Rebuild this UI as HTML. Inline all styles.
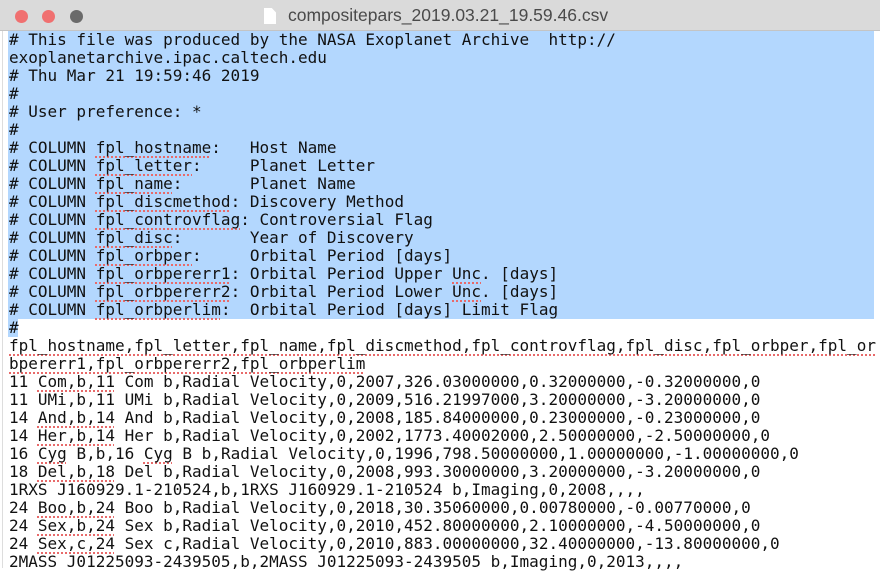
<!DOCTYPE html>
<html><head><meta charset="utf-8"><style>
html,body{margin:0;padding:0;width:880px;height:568px;overflow:hidden;background:#fff}
.tb{position:absolute;left:0;top:0;width:880px;height:30px;background:#dadada;border-bottom:1px solid #c4c4c4}
.dot{position:absolute;top:10px;width:13px;height:13px;border-radius:50%}
.title{position:absolute;left:288px;top:5px;font:17.5px "Liberation Sans",sans-serif;color:#4a4a4a;white-space:nowrap}
.doc{position:absolute;left:264px;top:8px;width:12px;height:16px;background:#fff;clip-path:polygon(0 0,65% 0,100% 28%,100% 100%,0 100%)}
.sel{position:absolute;left:8px;top:31px;width:866px;height:288px;background:#b3d7fe}
.sel2{position:absolute;left:8px;top:319px;width:10px;height:18px;background:#b3d7fe}
.txt{position:absolute;left:9px;top:31px;margin:0;font:16px/18px "DejaVu Sans Mono","Liberation Mono",monospace;color:#111;white-space:pre}
.u{text-decoration:underline dotted #e86a6a;text-decoration-thickness:2px;text-underline-offset:3px}
.lb{position:absolute;left:2px;top:31px;width:1px;height:537px;background:#ddd}
</style></head><body>
<div class="tb">
<div class="dot" style="left:15px;background:#f07070"></div>
<div class="dot" style="left:42px;background:#f07070"></div>
<div class="dot" style="left:70px;background:#6a6a6a"></div>
<div class="doc"></div>
<div class="title">compositepars_2019.03.21_19.59.46.csv</div>
</div>
<div class="lb"></div>
<div class="sel"></div><div class="sel2"></div>
<pre class="txt"># This file was produced by the NASA Exoplanet Archive  http://
exoplanetarchive.ipac.caltech.edu
# Thu Mar 21 19:59:46 2019
#
# User preference: *
#
# COLUMN <span class="u">fpl_hostname</span>:   Host Name
# COLUMN <span class="u">fpl_letter</span>:     Planet Letter
# COLUMN <span class="u">fpl_name</span>:       Planet Name
# COLUMN <span class="u">fpl_discmethod</span>: Discovery Method
# COLUMN <span class="u">fpl_controvflag</span>: Controversial Flag
# COLUMN <span class="u">fpl_disc</span>:       Year of Discovery
# COLUMN <span class="u">fpl_orbper</span>:     Orbital Period [days]
# COLUMN <span class="u">fpl_orbpererr1</span>: Orbital Period Upper <span class="u">Unc</span>. [days]
# COLUMN <span class="u">fpl_orbpererr2</span>: Orbital Period Lower <span class="u">Unc</span>. [days]
# COLUMN <span class="u">fpl_orbperlim</span>:  Orbital Period [days] Limit Flag
#
<span class="u">fpl_hostname,fpl_letter,fpl_name,fpl_discmethod,fpl_controvflag,fpl_disc,fpl_orbper,fpl_or</span>
<span class="u">bpererr1,fpl_orbpererr2,fpl_orbperlim</span>
11 <span class="u">Com,b,11</span> Com b,Radial Velocity,0,2007,326.03000000,0.32000000,-0.32000000,0
11 UMi,b,11 UMi b,Radial Velocity,0,2009,516.21997000,3.20000000,-3.20000000,0
14 <span class="u">And,b,14</span> And b,Radial Velocity,0,2008,185.84000000,0.23000000,-0.23000000,0
14 <span class="u">Her,b,14</span> Her b,Radial Velocity,0,2002,1773.40002000,2.50000000,-2.50000000,0
16 <span class="u">Cyg</span> B,b,16 <span class="u">Cyg</span> B b,Radial Velocity,0,1996,798.50000000,1.00000000,-1.00000000,0
18 <span class="u">Del,b,18</span> Del b,Radial Velocity,0,2008,993.30000000,3.20000000,-3.20000000,0
1RXS J160929.1-210524,b,1RXS J160929.1-210524 b,Imaging,0,2008,,,,
24 <span class="u">Boo,b,24</span> Boo b,Radial Velocity,0,2018,30.35060000,0.00780000,-0.00770000,0
24 <span class="u">Sex,b,24</span> Sex b,Radial Velocity,0,2010,452.80000000,2.10000000,-4.50000000,0
24 <span class="u">Sex,c,24</span> Sex c,Radial Velocity,0,2010,883.00000000,32.40000000,-13.80000000,0
2MASS J01225093-2439505,b,2MASS J01225093-2439505 b,Imaging,0,2013,,,,
</pre>
</body></html>
